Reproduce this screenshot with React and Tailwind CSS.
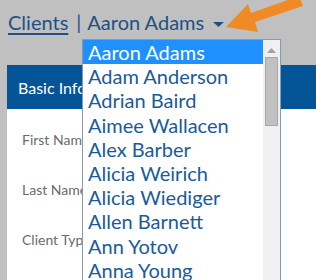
import React from "react";

const names = [
  "Aaron Adams",
  "Adam Anderson",
  "Adrian Baird",
  "Aimee Wallacen",
  "Alex Barber",
  "Alicia Weirich",
  "Alicia Wiediger",
  "Allen Barnett",
  "Ann Yotov",
  "Anna Young",
  "Anne Lee",
];

export default function App() {
  return (
    <div
      className="relative w-[316px] h-[280px] overflow-hidden bg-[#c0c0c0]"
      style={{ fontFamily: "Lato, 'Open Sans', sans-serif" }}
    >
      {/* Breadcrumb */}
      <div className="flex items-center h-[65px] pl-[8px] pb-[22px] text-[20px] text-[#1d5186]">
        <a href="#" className="underline underline-offset-[3px] decoration-[1.5px]">Clients</a>
        <span className="ml-[8px] mr-[6px]">|</span>
        <span>Aaron Adams</span>
        <svg width="11" height="5" viewBox="0 0 11 5" className="ml-[9px] mt-[5px]">
          <path d="M0 0 L11 0 L5.5 5 Z" fill="#1d5186" />
        </svg>
      </div>

      {/* Card */}
      <div className="ml-[7px] bg-white h-[220px]">
        <div className="h-[44px] bg-[#045597] text-white text-[16px] flex items-center pl-[11px] pt-[2px]">
          Basic Information
        </div>
        <div className="flex flex-col gap-[35px] pl-[15px] pt-[23px] text-[14px] text-[#6b6b6b]">
          <div className="leading-[15px]">First Name</div>
          <div className="leading-[15px]">Last Name</div>
          <div className="leading-[15px]">Client Type</div>
        </div>
      </div>

      {/* Dropdown list */}
      <div className="absolute left-[82px] top-[39px] w-[199px] h-[250px] bg-white border border-[#7f9db9] flex">
        <div className="flex-1 overflow-hidden">
          {names.map((n, i) => (
            <div
              key={n}
              className={`h-[24.2px] leading-[24px] pl-[5px] text-[20px] whitespace-nowrap ${
                i === 0 ? "bg-[#1e90ff] text-white" : "text-[#1a5a9c]"
              }`}
            >
              {n}
            </div>
          ))}
        </div>
        <div className="w-[17px] bg-[#f0f0f0] flex flex-col items-center">
          <svg width="9" height="5" viewBox="0 0 9 5" className="mt-[8px]">
            <path d="M0 5 L4.5 0 L9 5 Z" fill="#a3a3a3" />
          </svg>
          <div className="mt-[4px] w-[13px] h-[69px] bg-[#c1c1c1] border border-[#a8a8a8]" />
        </div>
      </div>

      {/* Orange pointer arrow */}
      <svg className="absolute left-0 top-0" width="316" height="60" viewBox="0 0 316 60">
        <polygon
          points="226,27 248,4 251,13 299,-4 303,6 255,22 258,32"
          fill="#f08a24"
        />
      </svg>
    </div>
  );
}
